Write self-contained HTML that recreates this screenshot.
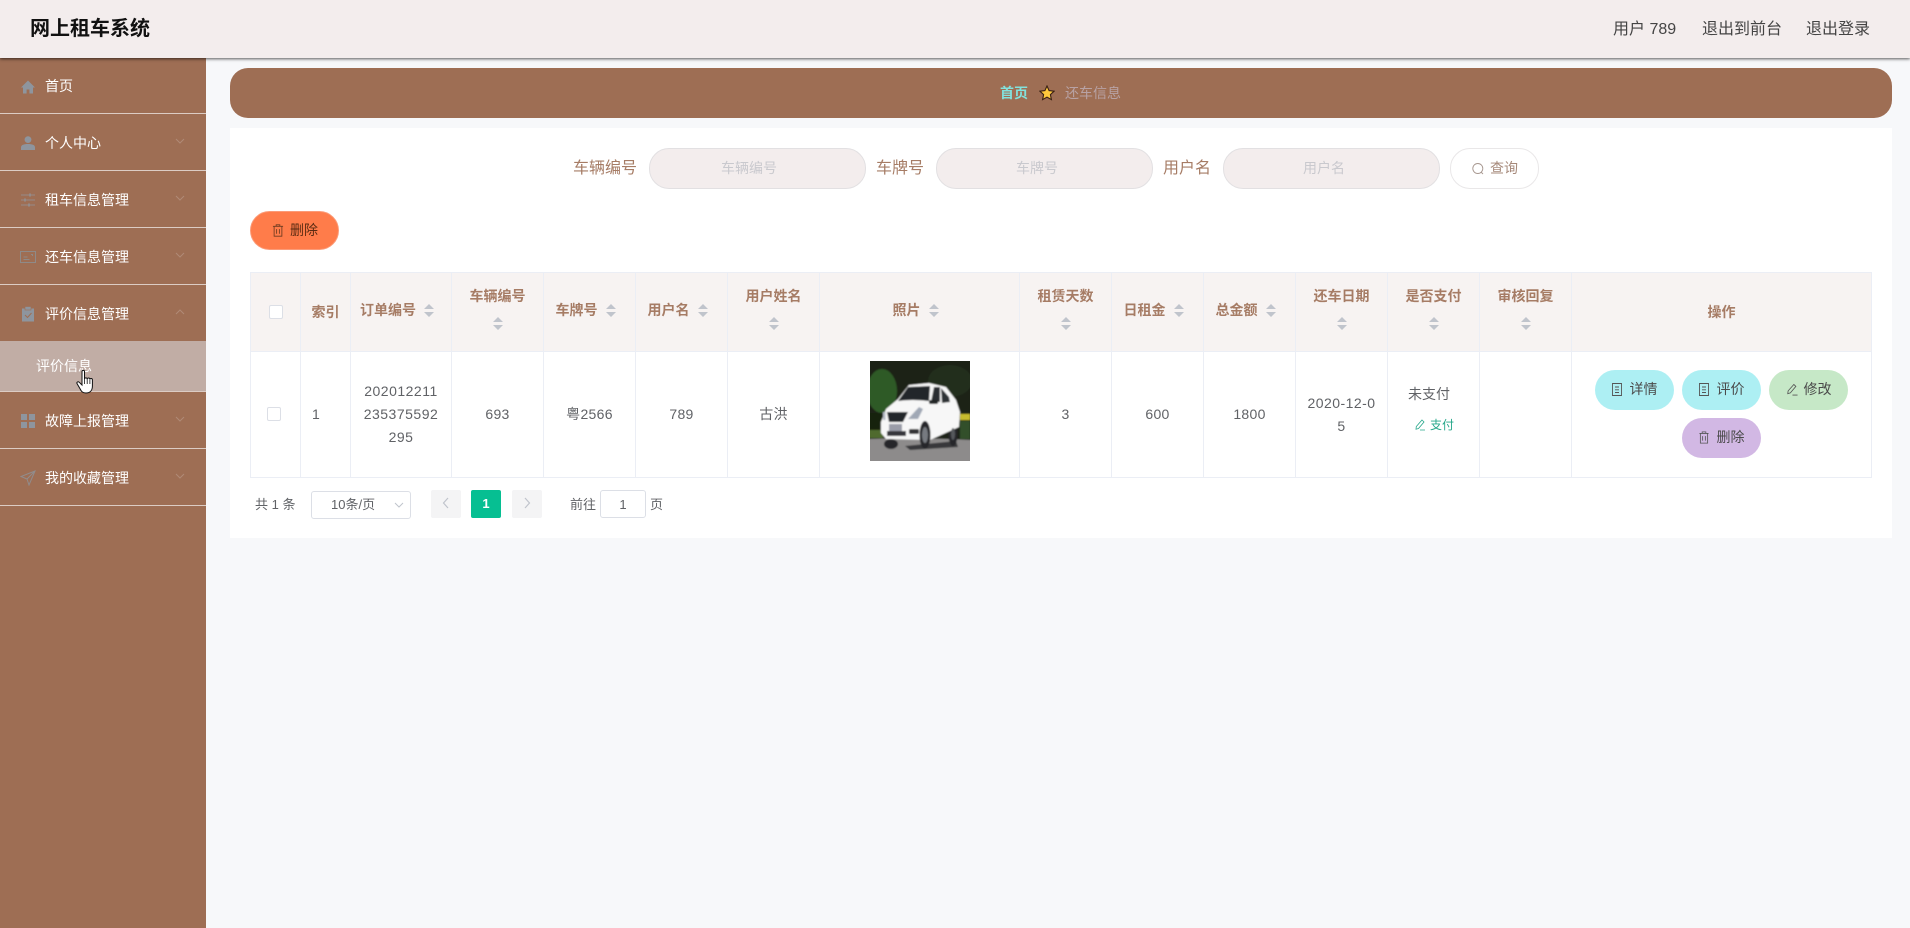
<!DOCTYPE html>
<html lang="zh-CN">
<head>
<meta charset="utf-8">
<title>网上租车系统</title>
<style>
html,body{margin:0;padding:0;width:1910px;height:928px;overflow:hidden;background:#f7f8fa;font-family:"Liberation Sans","Noto Sans CJK SC",sans-serif;color:#606266}
*{box-sizing:border-box}
.a{position:absolute;white-space:nowrap}
.hdr{left:0;top:0;width:1910px;height:58px;background:#f3eded;box-shadow:0 1px 3px rgba(0,0,0,.65);z-index:5}
.side{left:0;top:58px;width:206px;height:870px;background:#9e6e54}
.m{left:0;width:206px;height:57px;border-bottom:1px solid #dcccc4;color:#fff;font-size:14px}
.m span{position:absolute;left:45px;top:0;line-height:58px}
.m svg.i{position:absolute;left:20px;top:21px}
.m svg.c{position:absolute;left:175px;top:23px}
.crumb{left:230px;top:68px;width:1662px;height:50px;background:#9e6e54;border-radius:18px}
.card{left:230px;top:128px;width:1662px;height:410px;background:#fff}
.lb{font-size:16px;color:#a67c65;line-height:42px;top:148px}
.ip{top:148px;height:41px;background:#f3eded;border:1px solid #e2e0e2;border-radius:20px;font-size:14px;color:#c9c9ce;line-height:39px}
.ip b{position:absolute;font-weight:400}
table{position:absolute;left:250px;top:272px;width:1622px;border-collapse:separate;border-spacing:0;table-layout:fixed}
th,td{border-left:1px solid #ebeef5;border-top:1px solid #ebeef5;text-align:center;padding:0;font-size:14px;position:relative;word-break:break-all}
th{height:79px;background:#f7f3f2;color:#a67c65;font-weight:700}
td{height:127px;border-bottom:1px solid #ebeef5;color:#606266;line-height:23px;background:#fff;letter-spacing:.3px}
th:last-child,td:last-child{border-right:1px solid #ebeef5}
.ca{display:inline-block;vertical-align:middle;margin-left:8px;margin-right:8px;position:relative;top:-1px}
.two{display:block;position:absolute;left:0;right:0;top:11px;line-height:24px}
.two svg{display:block;margin:9px auto 0}
.one{position:relative;top:-2px}
.cb{position:absolute;width:14px;height:14px;border:1px solid #dcdfe6;border-radius:2px;background:#fff}
.btn{height:40px;width:79px;border-radius:20px;font-size:14px;color:#4a4a4a;line-height:39px;text-align:center;z-index:2}
.btn svg{vertical-align:-2px;margin-right:8px}
.pg{font-size:13px;color:#606266}
.pb{top:490px;height:28px;width:30px;background:#f4f4f5;border-radius:2px;text-align:center;line-height:27px;color:#c0c4cc;font-size:13px}
</style>
</head>
<body>
<div class="a hdr">
  <div class="a" style="left:30px;top:14px;font-size:20px;font-weight:700;color:#111;line-height:30px">网上租车系统</div>
  <div class="a" style="left:1613px;top:18px;font-size:16px;color:#444;line-height:24px">用户 789</div>
  <div class="a" style="left:1702px;top:18px;font-size:16px;color:#444;line-height:24px">退出到前台</div>
  <div class="a" style="left:1806px;top:18px;font-size:16px;color:#444;line-height:24px">退出登录</div>
</div>

<div class="a side"></div>
<div class="a m" style="top:57px">
  <svg class="i" style="top:22px" width="16" height="16" viewBox="0 0 16 16"><path d="M8 1.500 1 8.500h2v6h3.600v-4h2.800v4H13v-6h2z" fill="#8e959e"/></svg><span>首页</span></div>
<div class="a m" style="top:114px">
  <svg class="i" width="16" height="16" viewBox="0 0 16 16"><circle cx="8" cy="4.600" r="3.400" fill="#8e959e"/><path d="M1 15v-2.500C1 10 3.500 9 8 9s7 1 7 3.500V15z" fill="#8e959e"/></svg><span>个人中心</span>
  <svg class="c" width="10" height="8" viewBox="0 0 10 8"><path d="M1 2l4 4 4-4" fill="none" stroke="#b08a76" stroke-width="1"/></svg></div>
<div class="a m" style="top:171px">
  <svg class="i" width="16" height="16" viewBox="0 0 16 16"><path d="M1 3h14M1 8h14M1 13h14" stroke="#958b88" stroke-width="1"/><path d="M10 1.500v3M5 6.500v3M9 11.500v3" stroke="#958b88" stroke-width="2"/></svg><span>租车信息管理</span>
  <svg class="c" width="10" height="8" viewBox="0 0 10 8"><path d="M1 2l4 4 4-4" fill="none" stroke="#b08a76" stroke-width="1"/></svg></div>
<div class="a m" style="top:228px">
  <svg class="i" width="16" height="16" viewBox="0 0 16 16"><rect x=".5" y="2.500" width="15" height="11" fill="none" stroke="#8f8a88"/><path d="M3.500 8h4M3.500 10.500h6M11 5.500h1.500V7" fill="none" stroke="#8f8a88"/></svg><span>还车信息管理</span>
  <svg class="c" width="10" height="8" viewBox="0 0 10 8"><path d="M1 2l4 4 4-4" fill="none" stroke="#b08a76" stroke-width="1"/></svg></div>
<div class="a m" style="top:285px">
  <svg class="i" width="16" height="16" viewBox="0 0 16 16"><path d="M2 2.500h12V15.500H2z" fill="#8e959e"/><rect x="5" y=".5" width="6" height="3.500" fill="#8e959e" stroke="#9e6e54" stroke-width=".6"/><path d="M5 9l2.500 2.500L11.500 7" fill="none" stroke="#9e6e54"/></svg><span>评价信息管理</span>
  <svg class="c" width="10" height="8" viewBox="0 0 10 8"><path d="M1 6l4-4 4 4" fill="none" stroke="#b08a76" stroke-width="1"/></svg></div>
<div class="a m" style="top:341px;height:51px;background:#c1ada5"><span style="left:36px;line-height:51px">评价信息</span></div>
<div class="a m" style="top:392px">
  <svg class="i" width="16" height="16" viewBox="0 0 16 16"><path d="M1 1h6v6H1zM9 1h6v6H9zM1 9h6v6H1zM9 9h6v6H9z" fill="#8e959e"/></svg><span>故障上报管理</span>
  <svg class="c" width="10" height="8" viewBox="0 0 10 8"><path d="M1 2l4 4 4-4" fill="none" stroke="#b08a76" stroke-width="1"/></svg></div>
<div class="a m" style="top:449px">
  <svg class="i" width="16" height="16" viewBox="0 0 16 16"><path d="M15 1 1 6.500l6 2.500 2 6z M7 9l8-8" fill="none" stroke="#918c8c"/></svg><span>我的收藏管理</span>
  <svg class="c" width="10" height="8" viewBox="0 0 10 8"><path d="M1 2l4 4 4-4" fill="none" stroke="#b08a76" stroke-width="1"/></svg></div>

<svg class="a" style="left:76px;top:369px;z-index:9" width="20" height="25" viewBox="0 0 20 25">
  <path d="M6 2.500C6 1 8.500 1 8.500 2.500V10c.2-1.500 2.500-1.500 2.700 0 .2-1.300 2.500-1.300 2.700.2.300-1 2.400-1 2.500.6V17c0 4-2 7-6.500 7-3.500 0-4.500-1.500-6-4.500L1 14.500c-.6-1.500 1.200-2.400 2.300-1.200L6 16z" fill="#fff" stroke="#111" stroke-width="1"/>
  <path d="M8.500 10v5M11.200 10v5M13.900 10.500V15" stroke="#111" stroke-width=".8"/>
</svg>

<div class="a crumb"></div>
<div class="a" style="left:1000px;top:83px;font-size:14px;font-weight:700;color:#82e2dd;line-height:20px">首页</div>
<svg class="a" style="left:1039px;top:85px" width="16" height="16" viewBox="0 0 16 16"><path d="M8 1l2.100 4.600 5 .6-3.700 3.400 1 5L8 12.100 3.600 14.600l1-5L.9 6.200l5-.6z" fill="#ffc93c" stroke="#3a2113" stroke-width="1.100"/></svg>
<div class="a" style="left:1065px;top:83px;font-size:14px;color:#b8a2a4;line-height:20px">还车信息</div>

<div class="a card"></div>
<div class="a lb" style="left:573px">车辆编号</div>
<div class="a ip" style="left:649px;width:217px"><b style="left:71px">车辆编号</b></div>
<div class="a lb" style="left:876px">车牌号</div>
<div class="a ip" style="left:936px;width:217px"><b style="left:79px">车牌号</b></div>
<div class="a lb" style="left:1163px">用户名</div>
<div class="a ip" style="left:1223px;width:217px"><b style="left:79px">用户名</b></div>
<div class="a" style="left:1450px;top:148px;width:89px;height:41px;border:1px solid #e9e7e8;border-radius:20px;background:#fff;font-size:14px;color:#a6897a;line-height:39px">
  <svg class="a" style="left:20px;top:13px" width="14" height="14" viewBox="0 0 14 14"><circle cx="6.800" cy="6.500" r="5" fill="none" stroke="#a6968e" stroke-width=".9"/><path d="M10 10l2 2" stroke="#a6968e" stroke-width=".9"/></svg>
  <span class="a" style="left:39px">查询</span>
</div>

<div class="a" style="left:250px;top:211px;width:89px;height:39px;border-radius:20px;background:#ff7c4a;border:1px solid #fb9b78;font-size:14px;color:#5b2b12;line-height:37px">
  <svg class="a" style="left:21px;top:12px" width="12" height="13" viewBox="0 0 13 14"><path d="M1 2.500h11M4.500 2.500V.8h4v1.700M2.300 2.500v10.700h8.400V2.500M5 5.500v5M8 5.500v5" fill="none" stroke="#6b3a20" stroke-width=".9"/></svg>
  <span class="a" style="left:39px">删除</span>
</div>

<table>
<colgroup><col style="width:50px"><col style="width:50px"><col style="width:101px"><col style="width:92px"><col style="width:92px"><col style="width:92px"><col style="width:92px"><col style="width:200px"><col style="width:92px"><col style="width:92px"><col style="width:92px"><col style="width:92px"><col style="width:92px"><col style="width:92px"><col style="width:301px"></colgroup>
<tr>
<th><i class="cb" style="left:18px;top:32px"></i></th>
<th><span style="position:relative;left:0;top:0">索引</span></th>
<th><span class="one">订单编号<svg class="ca" width="10" height="13" viewBox="0 0 10 13"><path d="M5 0l5 5H0zM5 13l5-5H0z" fill="#c0c4cc"/></svg></span></th>
<th><span class="two">车辆编号<svg width="10" height="13" viewBox="0 0 10 13"><path d="M5 0l5 5H0zM5 13l5-5H0z" fill="#c0c4cc"/></svg></span></th>
<th><span class="one">车牌号<svg class="ca" width="10" height="13" viewBox="0 0 10 13"><path d="M5 0l5 5H0zM5 13l5-5H0z" fill="#c0c4cc"/></svg></span></th>
<th><span class="one">用户名<svg class="ca" width="10" height="13" viewBox="0 0 10 13"><path d="M5 0l5 5H0zM5 13l5-5H0z" fill="#c0c4cc"/></svg></span></th>
<th><span class="two">用户姓名<svg width="10" height="13" viewBox="0 0 10 13"><path d="M5 0l5 5H0zM5 13l5-5H0z" fill="#c0c4cc"/></svg></span></th>
<th><span class="one">照片<svg class="ca" width="10" height="13" viewBox="0 0 10 13"><path d="M5 0l5 5H0zM5 13l5-5H0z" fill="#c0c4cc"/></svg></span></th>
<th><span class="two">租赁天数<svg width="10" height="13" viewBox="0 0 10 13"><path d="M5 0l5 5H0zM5 13l5-5H0z" fill="#c0c4cc"/></svg></span></th>
<th><span class="one">日租金<svg class="ca" width="10" height="13" viewBox="0 0 10 13"><path d="M5 0l5 5H0zM5 13l5-5H0z" fill="#c0c4cc"/></svg></span></th>
<th><span class="one">总金额<svg class="ca" width="10" height="13" viewBox="0 0 10 13"><path d="M5 0l5 5H0zM5 13l5-5H0z" fill="#c0c4cc"/></svg></span></th>
<th><span class="two">还车日期<svg width="10" height="13" viewBox="0 0 10 13"><path d="M5 0l5 5H0zM5 13l5-5H0z" fill="#c0c4cc"/></svg></span></th>
<th><span class="two">是否支付<svg width="10" height="13" viewBox="0 0 10 13"><path d="M5 0l5 5H0zM5 13l5-5H0z" fill="#c0c4cc"/></svg></span></th>
<th><span class="two">审核回复<svg width="10" height="13" viewBox="0 0 10 13"><path d="M5 0l5 5H0zM5 13l5-5H0z" fill="#c0c4cc"/></svg></span></th>
<th>操作</th>
</tr>
<tr>
<td><i class="cb" style="left:16px;top:55px"></i></td>
<td style="text-align:left;padding-left:11px">1</td>
<td style="padding:0 10px;letter-spacing:.5px">202012211<br>235375592<br>295</td>
<td>693</td>
<td>粤2566</td>
<td>789</td>
<td>古洪</td>
<td></td>
<td>3</td>
<td>600</td>
<td>1800</td>
<td style="padding:0 6px;letter-spacing:.45px">2020-12-0<br>5</td>
<td></td>
<td></td>
<td></td>
</tr>
</table>

<svg class="a" style="left:870px;top:361px" width="100" height="100" viewBox="0 0 100 100">
  <defs><filter id="b" x="-5%" y="-5%" width="110%" height="110%"><feGaussianBlur stdDeviation=".7"/></filter></defs>
  <g filter="url(#b)">
  <rect x="-3" y="-3" width="106" height="106" fill="#1a2118"/>
  <ellipse cx="12" cy="30" rx="15" ry="22" fill="#2f5a28"/>
  <ellipse cx="80" cy="20" rx="22" ry="16" fill="#222f1c"/>
  <rect x="-3" y="52" width="22" height="17" fill="#16200f"/>
  <rect x="-3" y="69" width="16" height="8" fill="#4f6b2f"/>
  <rect x="90" y="53" width="10" height="6" fill="#c7bb2f"/>
  <rect x="90" y="60" width="10" height="18" fill="#33502a"/>
  <path d="M-3 78Q50 76 103 79V103H-3z" fill="#8d8b8b"/>
  <path d="M35 85 86 80 88 86 40 89z" fill="#39393a"/>
  <ellipse cx="21" cy="83" rx="7" ry="5" fill="#26262a"/>
  <ellipse cx="83" cy="73" rx="4.500" ry="12" fill="#25262a"/>
  <path d="M11 61 16 48 28 38 39 24 59 22 76 26 86 39 90 51 89 66 60 79 16 78 11 72z" fill="#f7f7f7"/>
  <path d="M28 40 38 26 60 25 59 40Q42 38 28 40z" fill="#24282a"/>
  <path d="M61 41 64 26 70 26 70 41z" fill="#2a2e30"/>
  <path d="M71 27 79 36 80 41 72 42z" fill="#2f3336"/>
  <rect x="59" y="39" width="9" height="4" rx="1.500" fill="#232628"/>
  <path d="M17 51 38 51 33 61 19 61z" fill="#24262c"/>
  <path d="M38 58 49 46 53 48 48 58z" fill="#a0a8b5"/>
  <rect x="13" y="51" width="2.500" height="8" fill="#b6bcc6"/>
  <rect x="19" y="63" width="13" height="7" fill="#9a9ca8"/>
  <rect x="17" y="70" width="19" height="5" fill="#35363a"/>
  <rect x="39" y="68" width="10" height="5" rx="1.500" fill="#303136"/>
  <ellipse cx="55" cy="74" rx="5.500" ry="14" fill="#26272b"/>
  <ellipse cx="55" cy="74" rx="3" ry="8" fill="#777a80"/>
  <ellipse cx="83" cy="73" rx="2" ry="6" fill="#55585c"/>
  </g>
</svg>

<div class="a" style="left:1408px;top:383px;font-size:14px;color:#606266;line-height:22px">未支付</div>
<svg class="a" style="left:1414px;top:419px" width="12" height="12" viewBox="0 0 12 12"><path d="M8 1l2 2-5.500 6.500-2.500.7.300-2.700zM6 11h5" fill="none" stroke="#26a78a" stroke-width=".8"/></svg>
<div class="a" style="left:1430px;top:416px;font-size:12px;color:#26a78a;line-height:18px">支付</div>

<div class="a btn" style="left:1595px;top:370px;background:#adeff3"><svg width="10" height="13" viewBox="0 0 10 13"><path d="M.5.5h9v12h-9zM3 4h4M3 6.800h4M3 9.500h4" fill="none" stroke="#555" stroke-width=".9"/></svg>详情</div>
<div class="a btn" style="left:1682px;top:370px;background:#adeff3"><svg width="10" height="13" viewBox="0 0 10 13"><path d="M.5.5h9v12h-9zM3 4h4M3 6.800h4M3 9.500h4" fill="none" stroke="#555" stroke-width=".9"/></svg>评价</div>
<div class="a btn" style="left:1769px;top:370px;background:#c6e8c7"><svg width="12" height="13" viewBox="0 0 13 13" style="margin-right:6px"><path d="M8.500 1l2.200 2.200-6 7-2.800.8.400-3zM7 12.500h5.500" fill="none" stroke="#555" stroke-width=".9"/></svg>修改</div>
<div class="a btn" style="left:1682px;top:418px;background:#d2b8e4"><svg width="10" height="13" viewBox="0 0 11 14"><path d="M.5 2.500h10M3.500 2.500V.8h4v1.700M1.500 2.500v10.700h8V2.500M4 5.500v5M7 5.500v5" fill="none" stroke="#555" stroke-width=".9"/></svg>删除</div>

<div class="a pg" style="left:255px;top:495px;line-height:20px">共 1 条</div>
<div class="a pg" style="left:311px;top:491px;width:100px;height:28px;border:1px solid #dcdfe6;border-radius:3px;background:#fff;line-height:26px;padding-left:19px">10条/页
  <svg class="a" style="left:82px;top:10px" width="10" height="7" viewBox="0 0 10 7"><path d="M1 1l4 4 4-4" fill="none" stroke="#c0c4cc"/></svg></div>
<div class="a pb" style="left:431px"><svg width="8" height="12" viewBox="0 0 8 12" style="margin-top:7px"><path d="M6 1 1.500 6 6 11" fill="none" stroke="#c0c4cc" stroke-width="1.200"/></svg></div>
<div class="a pb" style="left:471px;background:#06bf92;color:#fff;font-weight:700">1</div>
<div class="a pb" style="left:512px"><svg width="8" height="12" viewBox="0 0 8 12" style="margin-top:7px"><path d="M2 1l4.500 5L2 11" fill="none" stroke="#c0c4cc" stroke-width="1.200"/></svg></div>
<div class="a pg" style="left:570px;top:495px;line-height:20px">前往</div>
<div class="a pg" style="left:600px;top:490px;width:46px;height:28px;border:1px solid #dcdfe6;border-radius:3px;background:#fff;text-align:center;line-height:27px">1</div>
<div class="a pg" style="left:650px;top:495px;line-height:20px">页</div>
</body>
</html>
